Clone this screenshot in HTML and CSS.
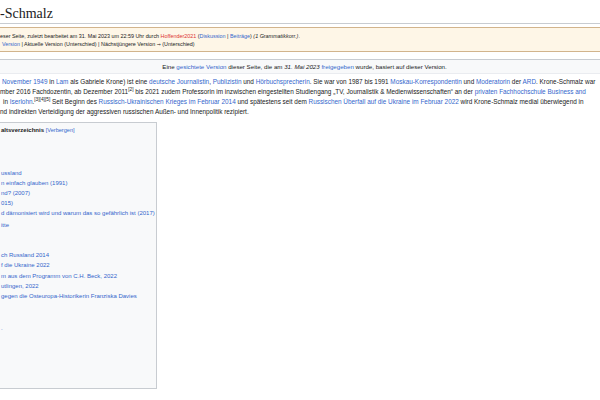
FILE: index.html
```html
<!DOCTYPE html>
<html lang="de">
<head>
<meta charset="utf-8">
<title>Krone-Schmalz</title>
<link rel="stylesheet" href="styles.css">
</head>
<body>
<div class="page">
  <h1 class="title">-Schmalz</h1>
  <div class="flagged">
    <div class="fl-line">eser Seite, zuletzt bearbeitet am 31. Mai 2023 um 22:59 Uhr durch <a class="new">Hoffender2021</a> (<a>Diskussion</a> | <a>Beiträge</a>) <i>(1 Grammatikkorr.)</i>.</div>
    <div class="fl-line fl2"><a>Version</a> | Aktuelle Version (Unterschied) | Nächstjüngere Version <span class="arrow">→</span> (Unterschied)</div>
  </div>
  <div class="sighted">Eine <a>gesichtete Version</a> dieser Seite, die am <i>31. Mai 2023</i> <a>freigegeben</a> wurde, basiert auf dieser Version.</div>
  <div class="lead">
    <div class="ln ln1"><a>November 1949</a> in <a>Lam</a> als Gabriele Krone) ist eine <a>deutsche Journalistin</a>, <a>Publizistin</a> und <a>Hörbuchsprecherin</a>. Sie war von 1987 bis 1991 <a>Moskau-Korrespondentin</a> und <a>Moderatorin</a> der <a>ARD</a>. Krone-Schmalz war</div>
    <div class="ln">mber 2016 Fachdozentin, ab Dezember 2011<sup>[2]</sup> bis 2021 zudem Professorin im inzwischen eingestellten Studiengang „TV, Journalistik &amp; Medienwissenschaften“ an der <a>privaten Fachhochschule Business and</a></div>
    <div class="ln ln3">in <a>Iserlohn</a>.<sup>[3][4][5]</sup> Seit Beginn des <a>Russisch-Ukrainischen Krieges im Februar 2014</a> und spätestens seit dem <a>Russischen Überfall auf die Ukraine im Februar 2022</a> wird Krone-Schmalz medial überwiegend in</div>
    <div class="ln">nd indirekten Verteidigung der aggressiven russischen Außen- und Innenpolitik rezipiert.</div>
  </div>
  <div class="toc">
    <div class="toc-head"><b>altsverzeichnis</b> <a class="toggle">[Verbergen]</a></div>
    <div class="toc-gap"></div>
    <ul class="toc-list">
      <li><a>ussland</a></li>
      <li><a>n einfach glauben (1991)</a></li>
      <li><a>nd? (2007)</a></li>
      <li><a>015)</a></li>
      <li><a>d dämonisiert wird und warum das so gefährlich ist (2017)</a></li>
      <li class="sub-end"><a>itte</a></li>
    </ul>
    <ul class="toc-list second">
      <li><a>ch Russland 2014</a></li>
      <li><a>f die Ukraine 2022</a></li>
      <li><a>m aus dem Programm von C.H. Beck, 2022</a></li>
      <li><a>utlingen, 2022</a></li>
      <li><a>gegen die Osteuropa-Historikerin Franziska Davies</a></li>
    </ul>
    <ul class="toc-list third">
      <li><a>.</a></li>
    </ul>
  </div>
</div>
</body>
</html>
```
FILE: styles.css
```css
html, body {
  margin: 0;
  padding: 0;
  background: #ffffff;
}
body {
  width: 600px;
  height: 400px;
  overflow: hidden;
  font-family: "Liberation Sans", Arial, sans-serif;
  color: #202122;
}
a {
  color: #3366cc;
  text-decoration: none;
}
a.new {
  color: #d33;
}
.page {
  width: 600px;
}
.title {
  margin: 0;
  padding-top: 5px;
  height: 18px;
  font-family: "Liberation Serif", "Times New Roman", serif;
  font-weight: normal;
  font-size: 14px;
  line-height: 18px;
  border-bottom: 1px solid #c8ccd1;
  white-space: nowrap;
}
.flagged {
  margin-top: 3px;
  padding: 4px 0 3px 0;
  background: #fef6e7;
  border-top: 1px solid #d2b48c;
  border-bottom: 1px solid #d2b48c;
  font-size: 5.4px;
  line-height: 8px;
  white-space: nowrap;
}
.fl2 {
  padding-left: 2px;
}
.arrow {
  font-family: "DejaVu Sans", sans-serif;
  font-size: 0.9em;
}
.sighted {
  margin-top: 7px;
  height: 13px;
  padding-left: 9px;
  background: #f8f9fa;
  border-top: 1px solid #c8ccd1;
  border-bottom: 1px solid #eaecf0;
  font-size: 6.15px;
  line-height: 13px;
  text-align: center;
  white-space: nowrap;
}
.lead {
  margin-top: 3px;
  font-size: 6.4px;
  line-height: 10px;
}
.ln {
  white-space: nowrap;
}
.ln1 {
  padding-left: 2px;
}
.ln3 {
  padding-left: 3px;
}
sup {
  font-size: 0.75em;
  line-height: 0;
  vertical-align: super;
}
.toc {
  margin-top: 5px;
  margin-left: -20px;
  width: 177px;
  height: 267px;
  padding-left: 20px;
  box-sizing: border-box;
  background: #f8f9fa;
  border: 1px solid #c8ccd1;
  font-size: 6px;
  line-height: 10px;
  white-space: nowrap;
}
.toc-head {
  padding-top: 2px;
}
.toc-head b {
  font-weight: bold;
}
.toggle {
  font-size: 5.6px;
}
.toc-gap {
  height: 33px;
}
.toc-list {
  list-style: none;
  margin: 0;
  padding: 0;
}
.toc-list .sub-end {
  margin-top: 2px;
}
.second {
  margin-top: 20px;
  line-height: 10.3px;
}
.third {
  margin-top: 22px;
}
```
